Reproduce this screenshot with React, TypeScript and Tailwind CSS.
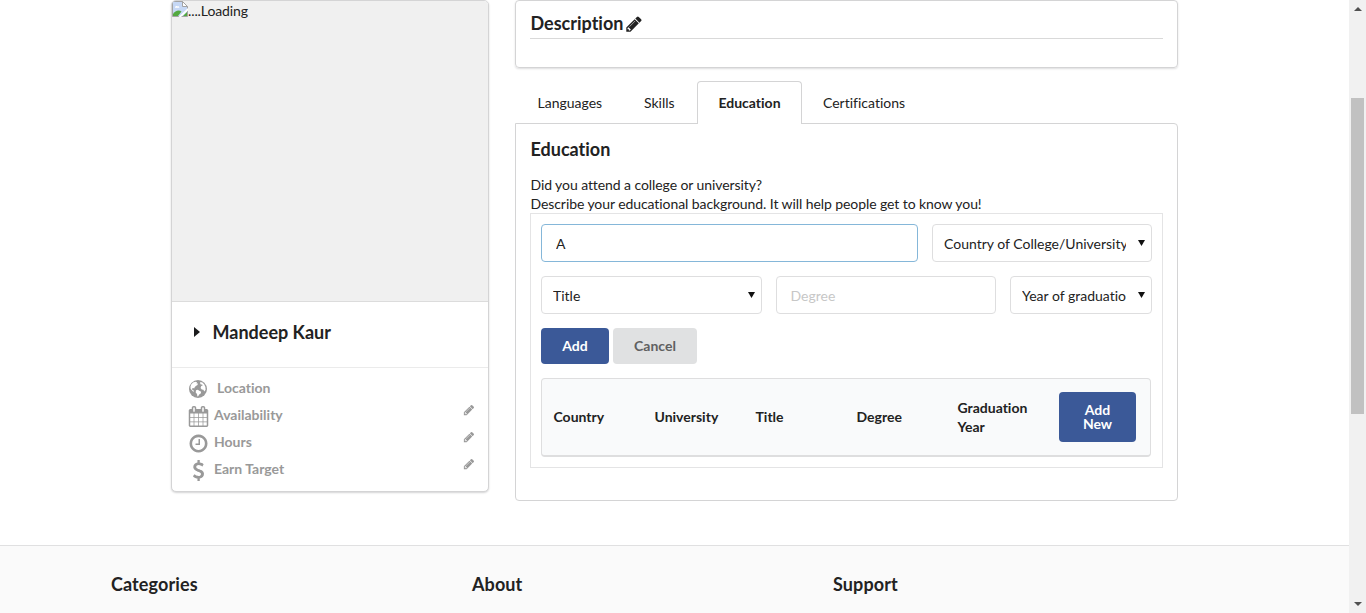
import React from "react";

const paths = {
  pencil:
    "M491 1536l91-91-235-235-91 91v107h128v128h107zm523-928q0-22-22-22-10 0-17 7l-542 542q-7 7-7 17 0 22 22 22 10 0 17-7l542-542q7-7 7-17zm-54-192l416 416-832 832h-416v-416zm683 96q0 53-37 90l-166 166-416-416 166-165q36-38 90-38 53 0 91 38l235 234q37 39 37 91z",
  clock:
    "M1024 544v448q0 14-9 23t-23 9h-320q-14 0-23-9t-9-23v-64q0-14 9-23t23-9h224v-352q0-14 9-23t23-9h64q14 0 23 9t9 23zm416 352q0-148-73-273t-198-198-273-73-273 73-198 198-73 273 73 273 198 198 273 73 273-73 198-198 73-273zm224 0q0 209-103 385.5t-279.5 279.5-385.5 103-385.5-103-279.5-279.5-103-385.5 103-385.5 279.5-279.5 385.5-103 385.5 103 279.5 279.5 103 385.5z",
  calendar:
    "M192 1664h288v-288h-288v288zm352 0h320v-288h-320v288zm-352-352h288v-320h-288v320zm352 0h320v-320h-320v320zm-352-384h288v-288h-288v288zm736 736h320v-288h-320v288zm-384-736h320v-288h-320v288zm768 736h288v-288h-288v288zm-384-352h320v-320h-320v320zm-352-864v-288q0-13-9.5-22.5t-22.5-9.5h-64q-13 0-22.5 9.5t-9.5 22.5v288q0 13 9.5 22.5t22.5 9.5h64q13 0 22.5-9.5t9.5-22.5zm736 864h288v-320h-288v320zm-384-384h320v-288h-320v288zm384 0h288v-288h-288v288zm32-480v-288q0-13-9.5-22.5t-22.5-9.5h-64q-13 0-22.5 9.5t-9.5 22.5v288q0 13 9.5 22.5t22.5 9.5h64q13 0 22.5-9.5t9.5-22.5zm384-64v1280q0 52-38 90t-90 38h-1408q-52 0-90-38t-38-90v-1280q0-52 38-90t90-38h128v-96q0-66 47-113t113-47h64q66 0 113 47t47 113v96h384v-96q0-66 47-113t113-47h64q66 0 113 47t47 113v96h128q52 0 90 38t38 90z",
  dollar:
    "M1362 1185q0 153-99.5 263.5t-258.5 136.5v175q0 14-9 23t-23 9h-135q-13 0-22.5-9.5t-9.5-22.5v-175q-66-9-127.5-31t-101.5-44.5-74-48-46.5-37.5-17.5-18q-17-21-2-41l103-135q7-10 23-12 15-2 24 9l2 2q113 99 243 125 37 8 74 8 81 0 142.5-43t61.5-122q0-28-15-53t-33.5-42-58.5-37.5-66-32-80-32.5q-39-16-61.5-25t-61.5-26.5-62.5-31-56.5-35.5-53.5-42.5-43.5-49-35.5-58-21-66.5-8.5-78q0-138 98-242t255-134v-180q0-13 9.5-22.5t22.5-9.5h135q14 0 23 9t9 23v176q57 6 110.5 23t87 33.5 63.5 37.5 39 29 15 14q17 18 5 38l-81 146q-8 15-23 16-14 3-27-7-3-3-14.5-12t-39-26.5-58.5-32-74.5-26-85.5-11.5q-95 0-155 43t-60 111q0 26 8.5 48t29.5 41.5 39.5 33 56 31 60.5 27 70 27.5q53 20 81 31.5t76 35 75.5 42.5 62 50 53 63.5 31.5 76.5 13 94z",
};

function Icon({ name, className }: { name: keyof typeof paths; className: string }) {
  return (
    <svg viewBox="0 0 1792 1792" fill="currentColor" className={`shrink-0 ${className}`}>
      <path d={paths[name]} />
    </svg>
  );
}

function GlobeIcon() {
  return (
    <svg viewBox="0 0 18 18" className="h-[18px] w-[18px]">
      <circle cx="9" cy="9" r="9" fill="currentColor" />
      <path
        d="M2.200 4.600L4 2.600l2.600-.9 1.600.5-.9 1 1.600.3-.4 1.500-1.700.9-1.300 1.500-.3 1.200-1-.5-1.200.5.4 1.300 1.300.6.4 1.200-1.400-.5L1.600 8.800 1.500 6.500zM7 10.200l1.800-.5 1.900 1.200 1.500.8-.5 1.700-1.500 1.100-1 1.800-.8.3-.4-2.500-1.300-1.700zM11.200 2l2.200.6 1.900 2 1.100 2.300.2 2.800-1.300 1.800-.9-1.700-1.600-.3-1.200-1.600.6-1.800 1.500-.7-.6-1-1.300.2-.6-1z"
        fill="#fff"
      />
    </svg>
  );
}

function BrokenImage() {
  return (
    <svg viewBox="0 0 16 16" className="h-4 w-4 shrink-0">
      <path d="M.5.5h10l5 5v10H.5z" fill="#c6d8f5" stroke="#a3a3a3" />
      <path d="M10.5.5v5h5z" fill="#fff" stroke="#a3a3a3" />
      <path d="M3 6.5c0-1.4 1.6-2 2.4-1.1C6.800 5 7.500 5.800 7.300 6.700H3z" fill="#fff" />
      <path d="M1 14.900V13c2-3.500 6-4.500 8.500-2.500L6 14.900z" fill="#53a93f" />
      <path d="M16 7v2.500L9 16H6.500z" fill="#fff" />
      <path d="M11 15l4-4v4z" fill="#53a93f" />
    </svg>
  );
}

function SelectBox({ label, className }: { label: string; className: string }) {
  return (
    <div
      className={`flex h-[38px] items-center rounded border border-[#dededf] bg-white pl-[11px] pr-[6px] ${className}`}
    >
      <span className="min-w-0 flex-1 overflow-hidden whitespace-nowrap pt-px leading-[19px]">{label}</span>
      <svg viewBox="0 0 7 7" className="mb-px ml-[12px] h-[6px] w-[7px] shrink-0" preserveAspectRatio="none">
        <path d="M0 0h7L3.500 7z" fill="#111" />
      </svg>
    </div>
  );
}

function ProfileRow({ icon, label, editable }: { icon: React.ReactNode; label: string; editable?: boolean }) {
  return (
    <div className="flex h-[27px] items-start text-[#999]">
      <span className="flex h-[22px] w-[22px] items-center justify-center">{icon}</span>
      <span className={`leading-[19px] font-bold ${editable ? "ml-[5px]" : "ml-[8px]"}`}>{label}</span>
      {editable && <Icon name="pencil" className="ml-auto mr-[13px] mt-[-1px] h-[12px] w-[12px]" />}
    </div>
  );
}

function ProfileCard() {
  return (
    <aside className="h-[492px] w-[318px] shrink-0 overflow-hidden rounded-[5px] border border-[#d4d4d5] bg-white shadow-[0_1px_2px_0_#d4d4d5]">
      <div className="flex h-[300px] items-start bg-[#f0f0f0]">
        <BrokenImage />
        <span className="leading-[20px] tracking-[-0.1px]">....Loading</span>
      </div>
      <div className="flex h-[67px] items-center border-y border-[#ebebeb] border-t-[#dcdcdc] pb-[4px] pl-[22px]">
        <svg viewBox="0 0 6 10" className="mb-[2px] h-[10px] w-[6px]">
          <path d="M0 0l6 5-6 5z" fill="#1b1c1d" />
        </svg>
        <h2 className="ml-[12.5px] text-[18px] font-bold">Mandeep Kaur</h2>
      </div>
      <div className="pl-[15px] pt-[10px]">
        <ProfileRow icon={<GlobeIcon />} label="Location" />
        <ProfileRow icon={<Icon name="calendar" className="h-[21px] w-[21px]" />} label="Availability" editable />
        <ProfileRow icon={<Icon name="clock" className="h-[21px] w-[21px]" />} label="Hours" editable />
        <ProfileRow icon={<Icon name="dollar" className="h-[21px] w-[21px]" />} label="Earn Target" editable />
      </div>
    </aside>
  );
}

function Tabs() {
  return (
    <nav className="flex h-[43px] items-center leading-[19px]">
      <span className="w-[106px] pl-[22.5px]">Languages</span>
      <span className="w-[76px] pl-[23px]">Skills</span>
      <span className="z-10 flex h-[43px] w-[105px] items-center justify-center rounded-t border border-b-0 border-[#d4d4d5] bg-white pb-px font-bold">
        Education
      </span>
      <span className="pl-[21px]">Certifications</span>
    </nav>
  );
}

function EducationPanel() {
  return (
    <section className="-mt-px h-[378px] rounded-b rounded-tr border border-[#d4d4d5] px-[14px] pt-[14px]">
      <h3 className="pl-[0.5px] text-[18px] leading-[23px] font-bold">Education</h3>
      <p className="mt-[14px] pl-[0.5px] leading-[19px] tracking-[-0.08px]">
        Did you attend a college or university?
        <br />
        Describe your educational background. It will help people get to know you!
      </p>
      <div className="h-[255px] border border-[#e4e4e5] p-[10px]">
        <div className="flex gap-[14px]">
          <input
            defaultValue="A"
            className="h-[38px] w-[377px] rounded border border-[#85b7d9] px-[14px] outline-none"
          />
          <SelectBox label="Country of College/University" className="w-[220px]" />
        </div>
        <div className="mt-[14px] flex gap-[14px]">
          <SelectBox label="Title" className="w-[221px]" />
          <input
            placeholder="Degree"
            className="h-[38px] w-[220px] rounded border border-[#dededf] px-[13.5px] outline-none placeholder:text-[#c7c7c7]"
          />
          <SelectBox label="Year of graduation" className="w-[142px]" />
        </div>
        <div className="mt-[14px] flex gap-[4px]">
          <button className="h-[36px] w-[68px] rounded bg-[#3b5998] pb-[2px] font-bold text-white">Add</button>
          <button className="h-[36px] w-[84px] rounded bg-[#e0e1e2] pb-[2px] font-bold text-[#5f6061]">Cancel</button>
        </div>
        <div className="mt-[14px] flex h-[79px] w-[610px] items-center rounded border border-b-2 border-[#dededf] bg-[#f9fafb] pl-[11.5px] leading-[19px] font-bold">
          <span className="w-[101px] pb-[2px]">Country</span>
          <span className="w-[101px] pb-[2px]">University</span>
          <span className="w-[101px] pb-[2px]">Title</span>
          <span className="w-[101px] pb-[2px]">Degree</span>
          <span className="w-[101.5px] pr-4">Graduation Year</span>
          <button className="h-[50px] w-[77px] rounded bg-[#3b5998] px-5 leading-[14px] text-white">Add New</button>
        </div>
      </div>
    </section>
  );
}

export default function App() {
  return (
    <div className="flex h-[613px] w-[1366px] overflow-hidden bg-white font-['Lato',sans-serif] text-[14px] text-[#222] [font-variant-ligatures:none]">
      <div className="flex w-[1349px] flex-col">
        <main className="flex h-[545px] pl-[171px]">
          <ProfileCard />
          <div className="ml-[26px] w-[663px]">
            <section className="h-[68px] rounded border border-[#d4d4d5] px-[14px] pt-[10px] shadow-[0_1px_2px_0_rgba(34,36,38,0.15)]">
              <div className="flex h-[28px] items-center border-b border-[#d9d9d9] pb-[2px] pl-[0.5px]">
                <h3 className="text-[18px] leading-[23px] font-bold">Description</h3>
                <Icon name="pencil" className="ml-[2px] h-[18px] w-[18px]" />
              </div>
            </section>
            <div className="mt-[13px]">
              <Tabs />
              <EducationPanel />
            </div>
          </div>
        </main>
        <footer className="flex h-[68px] border-t border-[#e0e0e1] bg-[#fafafa] pl-[111px] pt-[26px] text-[18px] leading-[24px] font-bold tracking-[0.1px]">
          <h3 className="w-[361px]">Categories</h3>
          <h3 className="w-[361px]">About</h3>
          <h3>Support</h3>
        </footer>
      </div>
      <div className="flex w-[17px] flex-col items-center bg-[#f1f1f1]">
        <div className="flex h-[98px] items-start pt-[7px]">
          <svg viewBox="0 0 8 4" className="h-[4px] w-[8px]">
            <path d="M0 4h8L4 0z" fill="#505050" />
          </svg>
        </div>
        <div className="h-[316px] w-[13px] bg-[#c1c1c1]" />
        <svg viewBox="0 0 8 4" className="mb-[7px] mt-auto h-[4px] w-[8px]">
          <path d="M0 0h8L4 4z" fill="#505050" />
        </svg>
      </div>
    </div>
  );
}
